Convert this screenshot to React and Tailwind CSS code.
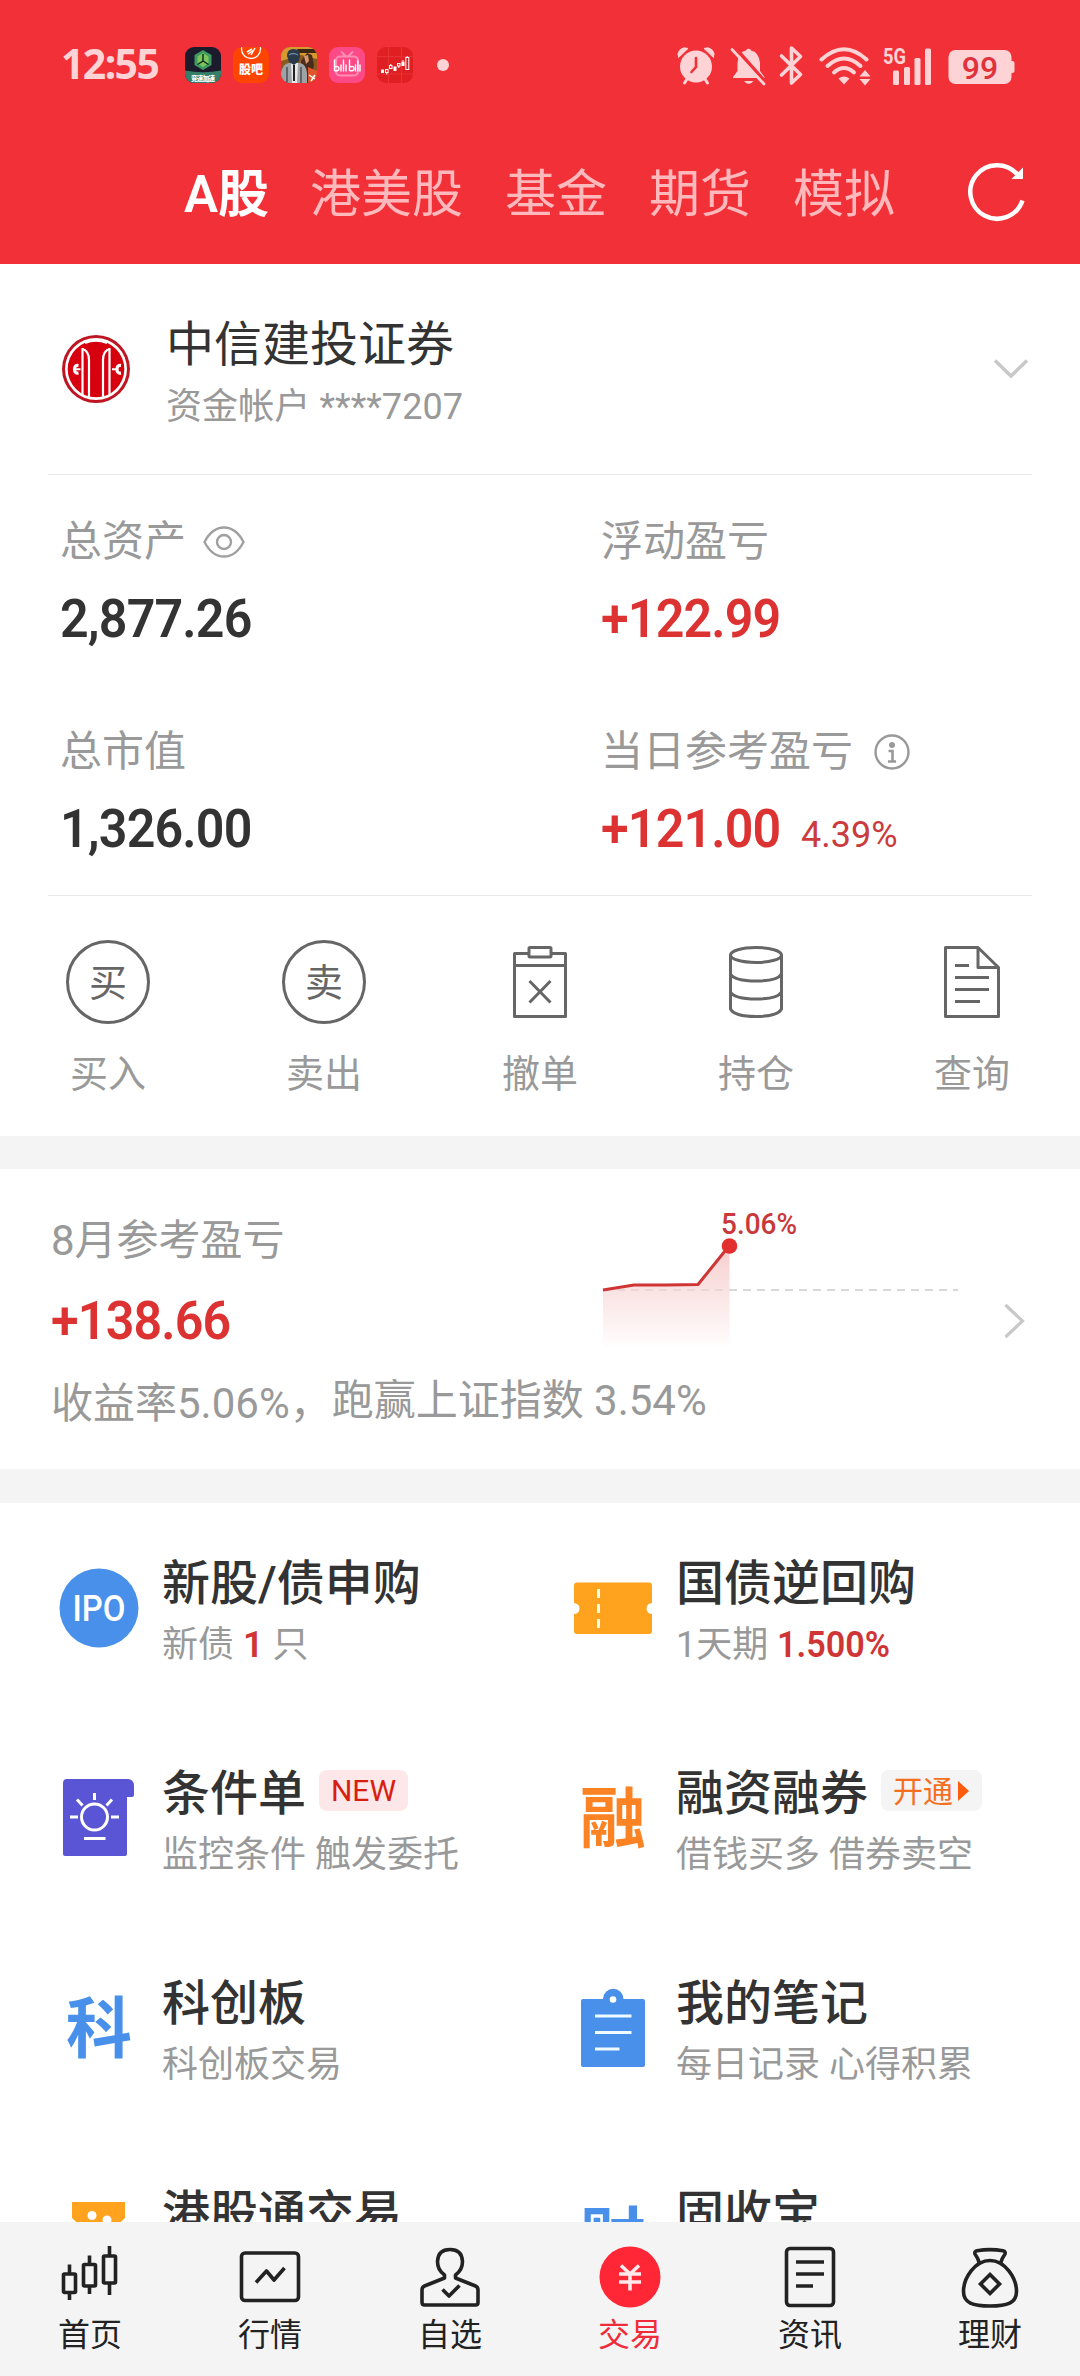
import React from 'react';

const FONT = "font-['Roboto','Noto_Sans_CJK_SC',sans-serif]";

/* ---------- status bar ---------- */

function AppIcons() {
  return (
    <div className="flex gap-3">
      <svg width="36" height="36" viewBox="0 0 36 36">
        <clipPath id="r0"><rect width="36" height="36" rx="9" /></clipPath>
        <g clipPath="url(#r0)">
          <rect width="36" height="36" fill="#1b1b2c" />
          <path d="M0 23.500Q18 27 36 23.500V36H0Z" fill="#357e68" />
          <path d="M18 3l8.500 5v10L18 23l-8.500-5V8Z" fill="#3f9a62" />
          <path d="M18 6l5.500 3.500v7L18 20l-5.500-3.500v-7Z" fill="#7bc65c" />
          <path d="M18 7v7l-5.500 3.500M18 14l5.500 3.500" stroke="#10231f" strokeWidth="1.400" fill="none" />
          <text x="18" y="33.500" fontSize="6.500" fontWeight="900" fill="#fff" textAnchor="middle" textLength="24">竞速加速</text>
        </g>
      </svg>
      <svg width="36" height="36" viewBox="0 0 36 36">
        <clipPath id="r1"><rect width="36" height="36" rx="9" /></clipPath>
        <g clipPath="url(#r1)">
          <rect width="36" height="36" fill="#fd4400" />
          <circle cx="18" cy="2" r="9.500" fill="none" stroke="#fff" strokeWidth="1.300" />
          <path d="M14 5l5-3M15 7l6-4M18 8l4-7" stroke="#fff" strokeWidth="1.500" />
          <text x="18" y="27" fontSize="12" fontWeight="900" fill="#fff" textAnchor="middle" textLength="24">股吧</text>
        </g>
      </svg>
      <svg width="36" height="36" viewBox="0 0 36 36">
        <clipPath id="r2"><rect width="36" height="36" rx="9" /></clipPath>
        <g clipPath="url(#r2)">
          <rect width="36" height="36" fill="#8a5a20" />
          <path d="M0 0H36V12L20 8L0 14Z" fill="#d79a2e" />
          <path d="M16 2h20v4H18Z" fill="#3a2612" />
          <path d="M20 14l6-8 5 2 2 10-4 18h-8Z" fill="#4a2c1c" />
          <path d="M23 9l4-1 1 6-3 3Z" fill="#d99a6c" />
          <path d="M27 20l9 4v12h-9Z" fill="#e2552a" />
          <path d="M28 28l6 4M30 34l4-6" stroke="#fff" strokeWidth="1.500" />
          <path d="M0 26q2-10 8-10h11q6 1 7 10v10H0Z" fill="#9ea3a6" />
          <path d="M10 16h7l-1 20h-5Z" fill="#e8e8e6" />
          <path d="M13 18v16" stroke="#1e2226" strokeWidth="2" />
          <path d="M6 20v16M20 20v16" stroke="#4b5054" strokeWidth="1.500" />
          <path d="M6 9q0-7 6.500-7T19 9l-1 5-5 4-5-3Z" fill="#2b3a4a" />
          <path d="M8 8q4-3 9 0" stroke="#6f8798" strokeWidth="1.300" fill="none" />
        </g>
      </svg>
      <svg width="36" height="36" viewBox="0 0 36 36">
        <rect width="36" height="36" rx="9" fill="#fd4a86" />
        <rect x="7" y="9.500" width="22" height="19" rx="4" fill="none" stroke="#ff8db4" strokeWidth="2.200" />
        <path d="M12.500 5l4 4M23.500 5l-4 4" stroke="#ff8db4" strokeWidth="2" strokeLinecap="round" />
        <path d="M5.500 13v10.500q4.500 1 4.500-2t-4.500-1.500M12 18v6M14.500 13v11M17 18v6M20.500 13v10.500q4.500 1 4.500-2t-4.500-1.500M26.500 18v6M28.800 14v10M31 18v6" stroke="#fff" strokeWidth="1.400" fill="none" strokeLinecap="round" />
      </svg>
      <svg width="36" height="36" viewBox="0 0 36 36">
        <rect width="36" height="36" rx="9" fill="#e01f22" />
        <path d="M11.500 0v36M24.500 0v36M0 9.500h36M0 27h36" stroke="#e8393b" strokeWidth=".8" />
        <g fill="#fff">
          <rect x="4" y="22.500" width="3" height="3.500" />
          <rect x="16.500" y="19.500" width="3" height="4.500" />
          <rect x="24.500" y="14.500" width="3" height="4.500" />
        </g>
        <g fill="none" stroke="#fff" strokeWidth="1">
          <rect x="8.500" y="22.500" width="2.500" height="3" />
          <rect x="12.500" y="18.500" width="2.500" height="3" />
          <rect x="20.500" y="16.500" width="2.500" height="2.500" />
          <rect x="28.800" y="10.500" width="3" height="12" />
          <path d="M9.800 25.500v2M13.800 17v1.500M21.800 19v2M26 13v1.500M30.300 9v1.500" />
        </g>
      </svg>
    </div>
  );
}

function StatusIcons() {
  return (
    <svg width="340" height="42" viewBox="0 0 340 42" fill="#fdd3d6" className="text-[#fdd3d6]">
      {/* alarm clock */}
      <g>
        <circle cx="19" cy="22.500" r="16" />
        <path d="M11 4.500A7 7 0 0 0 1.500 13.500Z" stroke="currentColor" strokeLinejoin="round" />
        <path d="M27 4.500A7 7 0 0 1 36.500 13.500Z" stroke="currentColor" strokeLinejoin="round" />
        <path d="M10 35l-2.500 4M28 35l2.500 4" stroke="currentColor" strokeWidth="3" strokeLinecap="round" />
        <path d="M19 14v9l-4.500 5" stroke="#f23038" strokeWidth="2.600" fill="none" strokeLinecap="round" />
      </g>
      {/* muted bell */}
      <g transform="translate(1 0)">
        <path d="M55 34V33l4.500-6V19Q60 8 68 6.500q1-2.500 3.500-1.500 1.500 0 1.500 1.500 8 1.500 9 12.500v8l4.500 6v1Z" />
        <path d="M66 37h9.500q-4.700 6-9.500 0Z" />
        <path d="M56.500 3l31 35" stroke="#f23038" strokeWidth="3.500" />
        <path d="M54 5.500l32 34.500" stroke="currentColor" strokeWidth="2.800" strokeLinecap="round" />
      </g>
      {/* bluetooth */}
      <path d="M104.500 12l19 18.500-9 8.500V4l9 8.500L104.500 31" fill="none" stroke="currentColor" strokeWidth="3.600" strokeLinejoin="round" strokeLinecap="round" />
      {/* wifi */}
      <g transform="translate(1 0)">
        <g fill="none" stroke="currentColor" strokeWidth="4" strokeLinecap="round">
          <path d="M143.500 15.500Q166 -5 188.500 15.500" />
          <path d="M149.500 22Q166 7 182.500 22" />
          <path d="M156 28.500Q166 19.500 176 28.500" />
        </g>
        <path d="M160.500 34.500q5.500-4 11 0L166 40.500Z" />
        <path d="M187 26l5.500 6.500h-11ZM187 41.500l5.500-6.500h-11Z" />
      </g>
      {/* signal */}
      <text x="206" y="19.500" fontSize="21.500" fontWeight="700" textLength="23" lengthAdjust="spacingAndGlyphs">5G</text>
      <rect x="216" y="26.500" width="6" height="14.500" rx="1.500" />
      <rect x="227" y="23" width="6" height="18" rx="1.500" />
      <rect x="237.500" y="14" width="6" height="27" rx="1.500" />
      <rect x="248" y="4.500" width="6" height="36.500" rx="1.500" />
      {/* battery */}
      <rect x="271.500" y="6" width="63" height="34" rx="7" />
      <rect x="331.500" y="17" width="6" height="12" rx="2" />
      <text x="303" y="34.500" fontSize="32" fontWeight="500" fill="#e0323b" textAnchor="middle">99</text>
    </svg>
  );
}

function Header() {
  return (
    <header className="h-[264px] bg-[#f23038]">
      <div className="flex h-[130px] items-center pl-[61px] pr-[63px]">
        <span className="w-[124px] whitespace-nowrap pb-1 font-['Noto_Sans',sans-serif] text-[41px] font-bold leading-none tracking-[-1.6px] text-[#fdd3d6]">12:55</span>
        <AppIcons />
        <span className="ml-6 size-3 rounded-full bg-[#fdd3d6]" />
        <div className="ml-auto"><StatusIcons /></div>
      </div>
      <nav className="flex h-[126px] items-center gap-[42px] whitespace-nowrap pl-[184px] pr-[51px] pt-0.5 text-[51px] leading-none text-[#ffb9bc]">
        <span className="w-[84px] font-semibold text-white">A股</span>
        <span>港美股</span>
        <span>基金</span>
        <span>期货</span>
        <span>模拟</span>
        <svg width="62" height="62" viewBox="0 0 62 62" className="mb-0.5 ml-auto">
          <path d="M55.500 38.500A26.800 26.800 0 1 1 50 12" fill="none" stroke="#fff" strokeWidth="4.500" />
          <path d="M56 5.500V17H44.500Z" fill="#fff" />
        </svg>
      </nav>
    </header>
  );
}

/* ---------- account ---------- */

function BrokerLogo() {
  return (
    <svg width="68" height="68" viewBox="0 0 68 68">
      <circle cx="34" cy="34" r="34" fill="#bd1622" />
      <circle cx="34" cy="34" r="31" fill="#fff" />
      <circle cx="34" cy="34" r="28.300" fill="#d6000f" />
      <g fill="none" stroke="#fff" strokeWidth="2.200">
        <path d="M20.500 13v48M47.500 13v48" />
        <path d="M20.500 14q6.500 2 6.500 11v38M47.500 14q-6.500 2-6.500 11v38" />
        <path d="M23 8q11-4.500 22 0" />
      </g>
      <g fill="none" stroke="#fff" strokeWidth="3.200">
        <path d="M16.500 30.500q-4-.5-4 3.800t4 3.800M59 30.500q-4-.5-4 3.800t4 3.800" />
        <path d="M13 34.300h5.500M50 34.300h5" strokeWidth="2" />
      </g>
    </svg>
  );
}

function Eye() {
  return (
    <svg width="42" height="32" viewBox="0 0 42 32" fill="none" stroke="#a0a0a0" strokeWidth="2.400">
      <path d="M1.500 16Q9 1.500 21 1.500T40.500 16Q33 30.500 21 30.500T1.500 16Z" strokeLinejoin="round" />
      <circle cx="21" cy="16" r="7" />
    </svg>
  );
}

function Info() {
  return (
    <svg width="36" height="36" viewBox="0 0 36 36" fill="none" stroke="#999" strokeWidth="2.400">
      <circle cx="18" cy="18" r="16.500" />
      <circle cx="18" cy="11" r="3" fill="#999" stroke="none" />
      <path d="M14.500 17h4v10M14 27.500h8" strokeWidth="2.600" />
    </svg>
  );
}

const DIGITS = 'inline-block origin-left scale-x-[0.93] text-[54px] font-semibold leading-[60px] tracking-[-0.9px]';

function Metric({ label, icon, value, red, extra }) {
  return (
    <div className="h-[210px] pt-[41px]">
      <div className="flex h-[52px] items-center text-[42px] leading-[52px] text-[#999]">
        {label}
        {icon}
      </div>
      <div className="mt-[21px] flex items-baseline whitespace-nowrap">
        <span className={`${DIGITS} ${red ? 'text-[#dc3232]' : 'text-[#333]'}`}>{value}</span>
        {extra}
      </div>
    </div>
  );
}

function Account() {
  return (
    <section>
      <div className="flex h-[210px] items-start pl-[62px] pr-[50px]">
        <div className="pt-[71px]"><BrokerLogo /></div>
        <div className="ml-9 pt-[53px]">
          <div className="text-[48px] leading-[56px] text-[#333]">中信建投证券</div>
          <div className="mt-[10px] text-[36px] leading-[48px] tracking-[0.1px] text-[#999]">资金帐户 ****7207</div>
        </div>
        <svg width="38" height="24" viewBox="0 0 38 24" className="ml-auto mt-[93px]" fill="none" stroke="#c8c8c8" strokeWidth="3.500">
          <path d="M3 3.500l16 15.500L35 3.500" />
        </svg>
      </div>
      <div className="mx-12 h-px bg-[#e9e9e9]" />
      <div className="grid grid-cols-[541px_1fr] pl-[60px]">
        <Metric label="总资产" icon={<span className="ml-[17px]"><Eye /></span>} value="2,877.26" />
        <Metric label="浮动盈亏" value="+122.99" red />
        <Metric label="总市值" value="1,326.00" />
        <Metric
          label="当日参考盈亏"
          icon={<span className="ml-[21px]"><Info /></span>}
          value="+121.00"
          red
          extra={<span className="ml-[7px] text-[36px] leading-none text-[#cb3a3c]">4.39%</span>}
        />
      </div>
      <div className="mx-12 h-px bg-[#e9e9e9]" />
    </section>
  );
}

/* ---------- quick actions ---------- */

function RoundGlyph({ children }) {
  return (
    <div className="flex size-[84px] items-center justify-center rounded-full border-[3px] border-[#666] pt-0.5 text-[38px] leading-none text-[#666]">
      {children}
    </div>
  );
}

function LineIcon({ children }) {
  return (
    <svg width="84" height="84" viewBox="0 0 84 84" fill="none" stroke="#666" strokeWidth="3" strokeLinejoin="round">
      {children}
    </svg>
  );
}

const ACTIONS = [
  ['买入', <RoundGlyph>买</RoundGlyph>],
  ['卖出', <RoundGlyph>卖</RoundGlyph>],
  ['撤单', (
    <LineIcon>
      <path d="M31 13.500H16.500V76.500H67.500V13.500H53" />
      <rect x="31" y="7.500" width="22" height="9.500" rx="1" />
      <path d="M16.500 25.500h51M31.500 41l21 21.500M52.500 41l-21 21.500" />
    </LineIcon>
  )],
  ['持仓', (
    <LineIcon>
      <ellipse cx="42" cy="15" rx="25.500" ry="7.500" />
      <path d="M16.500 15v54q4 7.500 25.500 7.500T67.500 69V15M16.500 34q4 7 25.500 7t25.500-7M16.500 52q4 7 25.500 7t25.500-7" />
    </LineIcon>
  )],
  ['查询', (
    <LineIcon>
      <path d="M48 7.500H15.500V76.500H68.500V27.500ZV27.500H68.500" />
      <path d="M25 25.500h14M25 37.500h34M25 49.500h34M25 61.500h25" />
    </LineIcon>
  )],
];

function Actions() {
  return (
    <section className="grid h-[240px] grid-cols-5 pt-[44px]">
      {ACTIONS.map(([label, icon]) => (
        <div key={label} className="flex flex-col items-center">
          {icon}
          <span className="mt-[26px] text-[38px] leading-[48px] text-[#999]">{label}</span>
        </div>
      ))}
    </section>
  );
}

/* ---------- monthly result ---------- */

function Trend() {
  return (
    <svg width="360" height="150" viewBox="0 0 360 150">
      <defs>
        <linearGradient id="area" x1="0" y1="0" x2="0" y2="1">
          <stop offset="0" stopColor="#dc3232" stopOpacity=".24" />
          <stop offset="1" stopColor="#dc3232" stopOpacity="0" />
        </linearGradient>
      </defs>
      <path d="M3 85H358" stroke="#ccc" strokeWidth="1.500" strokeDasharray="8 6" />
      <path d="M3 85L34 80H66L98 79.500L129.500 41V145H3Z" fill="#fff" fillOpacity=".6" />
      <path d="M3 85L34 80H66L98 79.500L129.500 41V145H3Z" fill="url(#area)" />
      <path d="M3 85L34 80H66L98 79.500L129 41" fill="none" stroke="#cf3535" strokeWidth="3" strokeLinejoin="round" />
      <circle cx="129.500" cy="41" r="7.800" fill="#e23030" />
      <text x="121" y="29" fontSize="30" fontWeight="500" fill="#c9393b" textLength="76" lengthAdjust="spacingAndGlyphs">5.06%</text>
    </svg>
  );
}

function Monthly() {
  return (
    <section className="flex h-[300px] bg-white pl-[51px] pr-[54px]">
      <div className="w-[549px] whitespace-nowrap pt-[46px] text-[42px] leading-[52px] text-[#999]">
        <div>8月参考盈亏</div>
        <div className={`mt-6 text-[#dc3232] ${DIGITS}`}>+138.66</div>
        <div className="mt-[27px] flex">
          <span className="w-[282px]">收益率5.06%，</span>
          <span className="-mt-[3px] mb-[3px]">跑赢上证指数 3.54%</span>
        </div>
      </div>
      <div className="pt-9"><Trend /></div>
      <svg width="24" height="40" viewBox="0 0 24 40" className="ml-auto mt-[132px]" fill="none" stroke="#c8c8c8" strokeWidth="3.200">
        <path d="M3.500 4L20.500 20L3.500 36" />
      </svg>
    </section>
  );
}

/* ---------- services ---------- */

function Tile({ children }) {
  return <svg width="90" height="90" viewBox="0 0 90 90">{children}</svg>;
}

function GlyphTile({ color, children }) {
  return (
    <span className={`flex size-[90px] items-center justify-center pt-1 text-[66px] font-bold leading-none ${color}`}>{children}</span>
  );
}

const SERVICES = [
  {
    title: '新股/债申购',
    sub: <>新债 <b className="font-semibold text-[#cf3535]">1</b> 只</>,
    icon: (
      <Tile>
        <circle cx="45" cy="45" r="39.500" fill="#4890ea" />
        <text x="45" y="58" fontSize="36" fontWeight="500" fill="#fff" textAnchor="middle" textLength="53" lengthAdjust="spacingAndGlyphs">IPO</text>
      </Tile>
    ),
  },
  {
    title: '国债逆回购',
    sub: <>1天期 <b className="inline-block origin-left scale-x-[0.95] font-semibold text-[#cf3535]">1.500%</b></>,
    icon: (
      <Tile>
        <path d="M9 19.500H81a3 3 0 0 1 3 3V40a5.500 5.500 0 0 0 0 11V68a3 3 0 0 1-3 3H9a3 3 0 0 1-3-3V51a5.500 5.500 0 0 0 0-11V22.500a3 3 0 0 1 3-3Z" fill="#ffa21e" />
        <path d="M30.500 26v9M30.500 41v9M30.500 56v9" stroke="#fffbe8" strokeWidth="3" />
      </Tile>
    ),
  },
  {
    title: '条件单',
    sub: '监控条件 触发委托',
    badge: <span className="mb-[7px] ml-[13px] flex h-[41px] w-[89px] items-center justify-center rounded-lg bg-[#fee7e8] pt-px text-[30px] leading-none text-[#d81e10]">NEW</span>,
    icon: (
      <Tile>
        <path d="M13 6H74a6 6 0 0 1 6 6V22a2 2 0 0 1-2 2H73V81a2 2 0 0 1-2 2H11a2 2 0 0 1-2-2V10a4 4 0 0 1 4-4Z" fill="#5a55d4" />
        <g fill="none" stroke="#fff" strokeWidth="3">
          <circle cx="40.500" cy="44" r="13" />
          <path d="M40.500 20v7M16 44h8M57 44h8M23 26.500l5.500 6M58 26.500l-5.500 6M30 65.500h21.500" />
        </g>
      </Tile>
    ),
  },
  {
    title: '融资融券',
    sub: '借钱买多 借券卖空',
    badge: (
      <span className="mb-[7px] ml-[13px] flex h-[41px] w-[101px] items-center gap-[5px] rounded-lg bg-[#f4f4f4] pl-3 text-[30px] leading-none text-[#f4701f]">
        <span className="pt-0.5">开通</span>
        <svg width="11" height="20" viewBox="0 0 11 20"><path d="M0 0L11 10L0 20Z" fill="#ff5c0c" /></svg>
      </span>
    ),
    icon: <GlyphTile color="text-[#fb8324]">融</GlyphTile>,
  },
  {
    title: '科创板',
    sub: '科创板交易',
    icon: <GlyphTile color="text-[#4890ea]">科</GlyphTile>,
  },
  {
    title: '我的笔记',
    sub: '每日记录 心得积累',
    icon: (
      <Tile>
        <path d="M35 16a10.200 10.200 0 0 1 20.500 0H75a2 2 0 0 1 2 2V82a2 2 0 0 1-2 2H15a2 2 0 0 1-2-2V18a2 2 0 0 1 2-2Z" fill="#4890ea" />
        <circle cx="45" cy="16.500" r="3.300" fill="#fff" />
        <path d="M27 33h36.500M27 49.500h36.500M27 66h24.500" stroke="#f0fbff" strokeWidth="3.200" />
      </Tile>
    ),
  },
  {
    title: '港股通交易',
    icon: (
      <Tile>
        <path d="M18 9H71V25L58 37V80H31V37L18 25Z" fill="#ffa21e" />
        <circle cx="38" cy="22.500" r="4.500" fill="#fff" />
        <circle cx="53" cy="27" r="4.500" fill="#fff" />
      </Tile>
    ),
  },
  {
    title: '固收宝',
    icon: <GlyphTile color="text-[#4890ea]">财</GlyphTile>,
  },
];

function Services() {
  return (
    <section className="grid h-[719px] grid-cols-[514px_1fr] overflow-hidden bg-white">
      {SERVICES.map((s) => (
        <div key={s.title} className="flex h-[210px] items-center gap-[18px] whitespace-nowrap pl-[54px]">
          {s.icon}
          <div className="h-[210px] pt-[53px]">
            <div className="flex h-14 items-center">
              <span className="text-[48px] font-medium leading-[56px] text-[#333]">{s.title}</span>
              {s.badge}
            </div>
            <div className="mt-[11px] text-[36px] leading-[44px] text-[#999]">{s.sub}</div>
          </div>
        </div>
      ))}
    </section>
  );
}

/* ---------- bottom navigation ---------- */

function NavIcon({ children }) {
  return (
    <svg width="62" height="62" viewBox="0 0 62 62" fill="none" stroke="#222" strokeWidth="3.600" strokeLinejoin="round">
      {children}
    </svg>
  );
}

const TABS = [
  ['首页', (
    <NavIcon>
      <rect x="4.500" y="28" width="12" height="18.500" rx="1" />
      <rect x="24.500" y="18.500" width="12" height="21.500" rx="1" />
      <rect x="44.500" y="10" width="12" height="27" rx="1" />
      <path d="M10.500 18.500V28M10.500 46.500V54M30.500 9.500v9M30.500 40v8M50.500 0v10M50.500 37v12" />
    </NavIcon>
  )],
  ['行情', (
    <NavIcon>
      <rect x="2.500" y="7" width="57" height="47.500" rx="3.500" />
      <path d="M17 36.500L27.500 25L35 34L45.500 22" />
    </NavIcon>
  )],
  ['自选', (
    <NavIcon>
      <path d="M25.500 32v-3Q18.500 24 18.500 15.500Q19 3.500 31 3.500T43.500 15.500Q43.500 24 36.500 29v3L56.500 40Q59 41 59 44V56.500Q59 59 56.500 59H5.500Q3 59 3 56.500V44Q3 41 5.500 40Z" />
      <path d="M23.500 43.500L30 50L40.500 39.500" />
    </NavIcon>
  )],
  ['交易', (
    <svg width="62" height="62" viewBox="0 0 62 62">
      <ellipse cx="31" cy="31" rx="30.500" ry="30.500" fill="#ff2736" />
      <path d="M22 19.500l9 8.500l9-8.500M20 28h22M20 36h22M31 28v16.500" fill="none" stroke="#ffe9ea" strokeWidth="3.600" />
    </svg>
  )],
  ['资讯', (
    <NavIcon>
      <rect x="7.500" y="2.500" width="47" height="57" rx="3.500" />
      <path d="M17 16h28M17 28h28M17 40h17" />
    </NavIcon>
  )],
  ['理财', (
    <NavIcon>
      <path d="M20.500 17.500Q19 12 16 8Q15 5.500 18 4.800Q31 2.500 44 4.800Q47 5.500 46 8Q43 12 41.500 17.500" />
      <path d="M31 14.500C46 14.500 57.500 32 57.500 45.500C57.500 57 48 60 31 60S4.500 57 4.500 45.500C4.500 32 16 14.500 31 14.500Z" />
      <path d="M31 28.500L40.500 38L31 47.500L21.500 38Z" strokeLinejoin="miter" />
    </NavIcon>
  )],
];

function BottomNav() {
  return (
    <nav className="grid h-[154px] grid-cols-6 bg-[#f4f4f4] pt-6">
      {TABS.map(([label, icon]) => (
        <div key={label} className="flex flex-col items-center">
          {icon}
          <span className={`mt-[7px] text-[32px] leading-10 ${label === '交易' ? 'text-[#f02b3a]' : 'text-[#222]'}`}>{label}</span>
        </div>
      ))}
    </nav>
  );
}

export default function App() {
  return (
    <div className={`h-[2376px] w-[1080px] overflow-hidden bg-white ${FONT}`} lang="zh-CN">
      <Header />
      <Account />
      <Actions />
      <div className="h-[33px] bg-[#f4f4f4]" />
      <Monthly />
      <div className="h-[34px] bg-[#f4f4f4]" />
      <Services />
      <BottomNav />
    </div>
  );
}
